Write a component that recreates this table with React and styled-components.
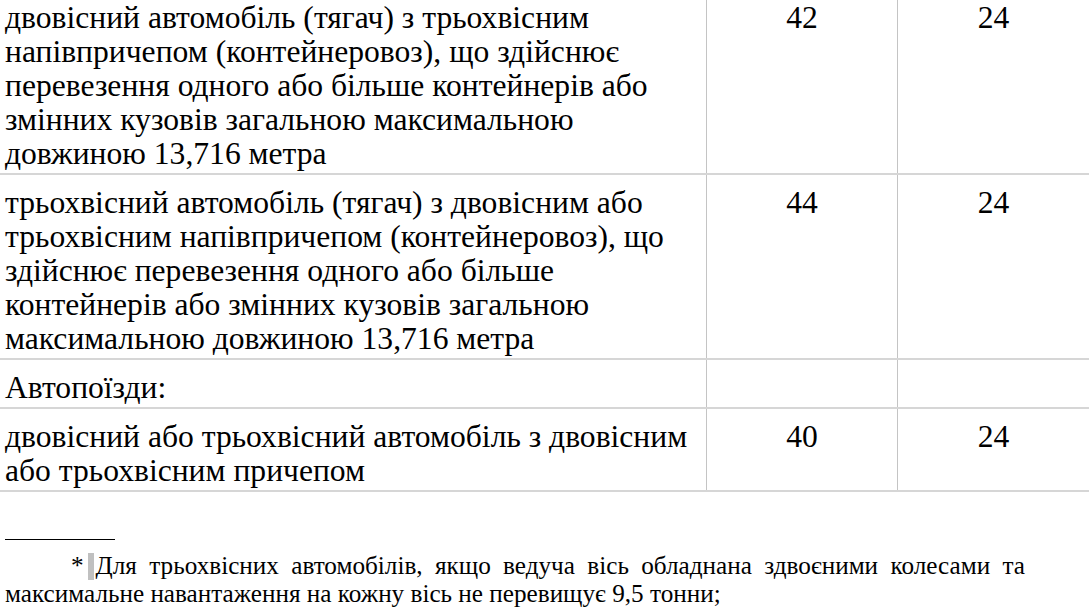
import React from "react";
import styled, { createGlobalStyle } from "styled-components";

const serif = `"Liberation Serif", "Times New Roman", serif`;

const GlobalStyle = createGlobalStyle`
  html, body {
    margin: 0;
    padding: 0;
    background: #ffffff;
    overflow: hidden;
  }
  body {
    font-family: ${serif};
    color: #000000;
  }
`;

const Page = styled.div`
  width: 1089px;
  height: 615px;
  overflow: hidden;
`;

const Table = styled.table`
  border-collapse: collapse;
  table-layout: fixed;
  width: 1090px;
  margin: -12px 0 0 -1px;
  font-family: ${serif};
  font-size: 31.6px;
  line-height: 34px;
  color: #000000;
`;

const Row = styled.tr`
  border-top: 2px solid #d6d6d6;
  border-bottom: 2px solid #d6d6d6;
`;

const Cell = styled.td`
  border-left: 1px solid #c4c4c4;
  border-right: 1px solid #c4c4c4;
  vertical-align: top;
  padding: 11px 5px 2px 5px;
  text-align: ${(p) => (p.$center ? "center" : "left")};
`;

const FootnoteRule = styled.div`
  width: 110px;
  height: 1px;
  background: #000000;
  margin: 47px 0 0 5px;
`;

const Footnote = styled.p`
  margin: 12px 0 0 5px;
  width: 1020px;
  font-family: ${serif};
  font-size: 25.2px;
  line-height: 28px;
  text-align: justify;
  text-indent: 66px;
`;

const Mark = styled.span`
  display: inline-block;
  width: 6px;
  height: 27px;
  margin: 0 2px 0 4px;
  background: #c0c0c0;
  vertical-align: -6px;
`;

const rows = [
  {
    text: [
      "двовісний автомобіль (тягач) з трьохвісним",
      "напівпричепом (контейнеровоз), що здійснює",
      "перевезення одного або більше контейнерів або",
      "змінних кузовів загальною максимальною",
      "довжиною 13,716 метра",
    ],
    a: "42",
    b: "24",
  },
  {
    text: [
      "трьохвісний автомобіль (тягач) з двовісним або",
      "трьохвісним напівпричепом (контейнеровоз), що",
      "здійснює перевезення одного або більше",
      "контейнерів або змінних кузовів загальною",
      "максимальною довжиною 13,716 метра",
    ],
    a: "44",
    b: "24",
  },
  { text: ["Автопоїзди:"], a: "", b: "" },
  {
    text: [
      "двовісний або трьохвісний автомобіль з двовісним",
      "або трьохвісним причепом",
    ],
    a: "40",
    b: "24",
  },
];

const App = () => {
  return (
    <Page>
      <GlobalStyle />
      <Table>
        <colgroup>
          <col style={{ width: 707 }} />
          <col style={{ width: 191 }} />
          <col style={{ width: 192 }} />
        </colgroup>
        <tbody>
          {rows.map((row, i) => (
            <Row key={i}>
              <Cell>
                {row.text.map((line, j) => (
                  <React.Fragment key={j}>
                    {j > 0 && <br />}
                    {line}
                  </React.Fragment>
                ))}
              </Cell>
              <Cell $center>{row.a}</Cell>
              <Cell $center>{row.b}</Cell>
            </Row>
          ))}
        </tbody>
      </Table>
      <FootnoteRule />
      <Footnote>
        *<Mark />Для трьохвісних автомобілів, якщо ведуча вісь обладнана
        здвоєними колесами та максимальне навантаження на кожну вісь не
        перевищує 9,5 тонни;
      </Footnote>
    </Page>
  );
};

export default App;
